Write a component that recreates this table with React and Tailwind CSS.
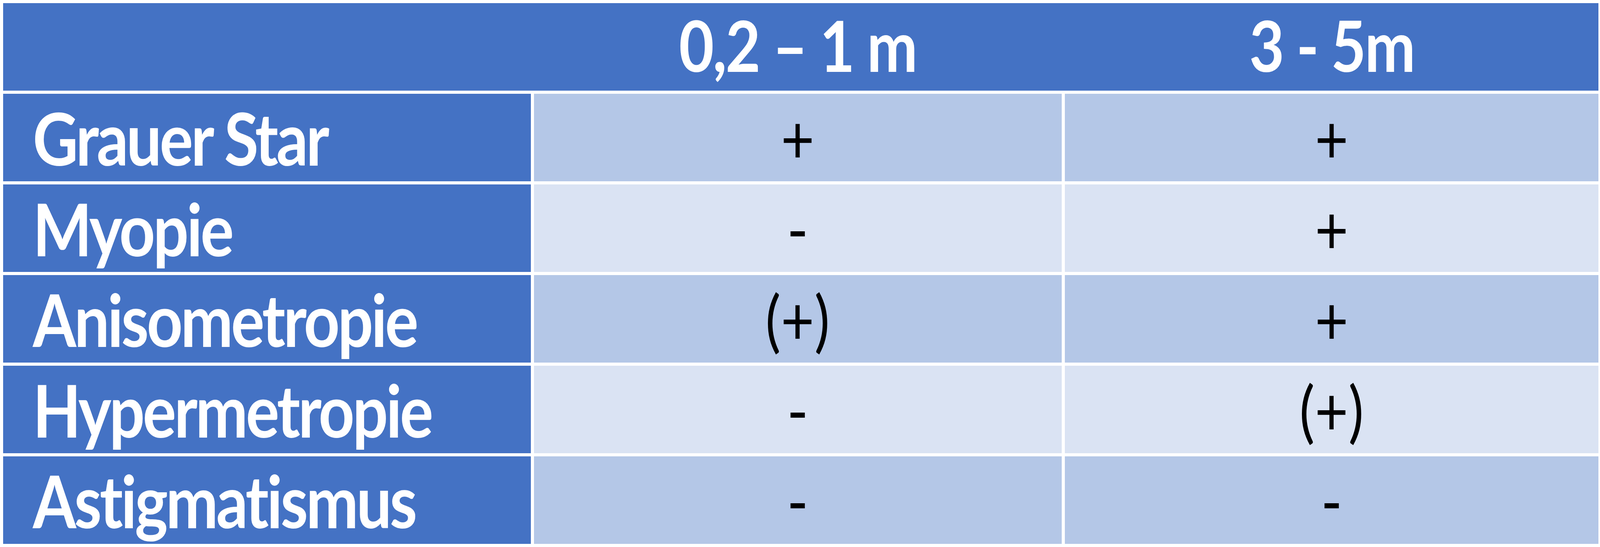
const COLS = ["0,2 – 1 m", "3 - 5m"];

const ROWS = [
  { label: "Grauer Star", values: ["+", "+"] },
  { label: "Myopie", values: ["-", "+"] },
  { label: "Anisometropie", values: ["(+)", "+"] },
  { label: "Hypermetropie", values: ["-", "(+)"] },
  { label: "Astigmatismus", values: ["-", "-"] },
];

// the slide was drawn 4758px wide; squeeze glyphs when the window is narrower
const sx = typeof window !== "undefined" ? Math.min(1, window.innerWidth / 4758) : 1;

export default function App() {
  return (
    <div className="w-full h-[1400px] bg-white pt-[8px] pl-[8px] pr-[4px] font-['Lato',sans-serif] overflow-hidden">
      <div className="grid grid-cols-[1570fr_1571fr_1588fr] gap-x-[8px] gap-y-[8px]">
        {/* header */}
        <div className="col-span-3 h-[224px] bg-[#4472c4] grid grid-cols-[1570fr_1571fr_1588fr] gap-x-[8px] items-center">
          <div />
          {COLS.map((c) => (
            <div key={c} className="text-center text-white font-bold text-[180px] leading-none tracking-[-4px] -mt-[12px] whitespace-nowrap">
              <span className="inline-block" style={{ transform: `scaleX(${sx})` }}>{c}</span>
            </div>
          ))}
        </div>

        {ROWS.map((row, i) => {
          const bg = i % 2 === 0 ? "bg-[#b4c7e7]" : "bg-[#dae3f3]";
          return [
            <div key={row.label} className="min-w-0 h-[224px] bg-[#4472c4] flex items-center pl-[5.6%]">
              <span
                className="inline-block origin-left text-white font-bold text-[186px] leading-none tracking-[-6px] whitespace-nowrap"
                style={{ transform: `scaleX(${sx})` }}
              >
                {row.label}
              </span>
            </div>,
            ...row.values.map((v, j) => (
              <div key={row.label + j} className={`min-w-0 h-[224px] ${bg} flex items-center justify-center`}>
                <span className="inline-block text-black text-[172px] leading-none" style={{ transform: `scaleX(${sx})` }}>
                  {v}
                </span>
              </div>
            )),
          ];
        })}
      </div>
    </div>
  );
}
